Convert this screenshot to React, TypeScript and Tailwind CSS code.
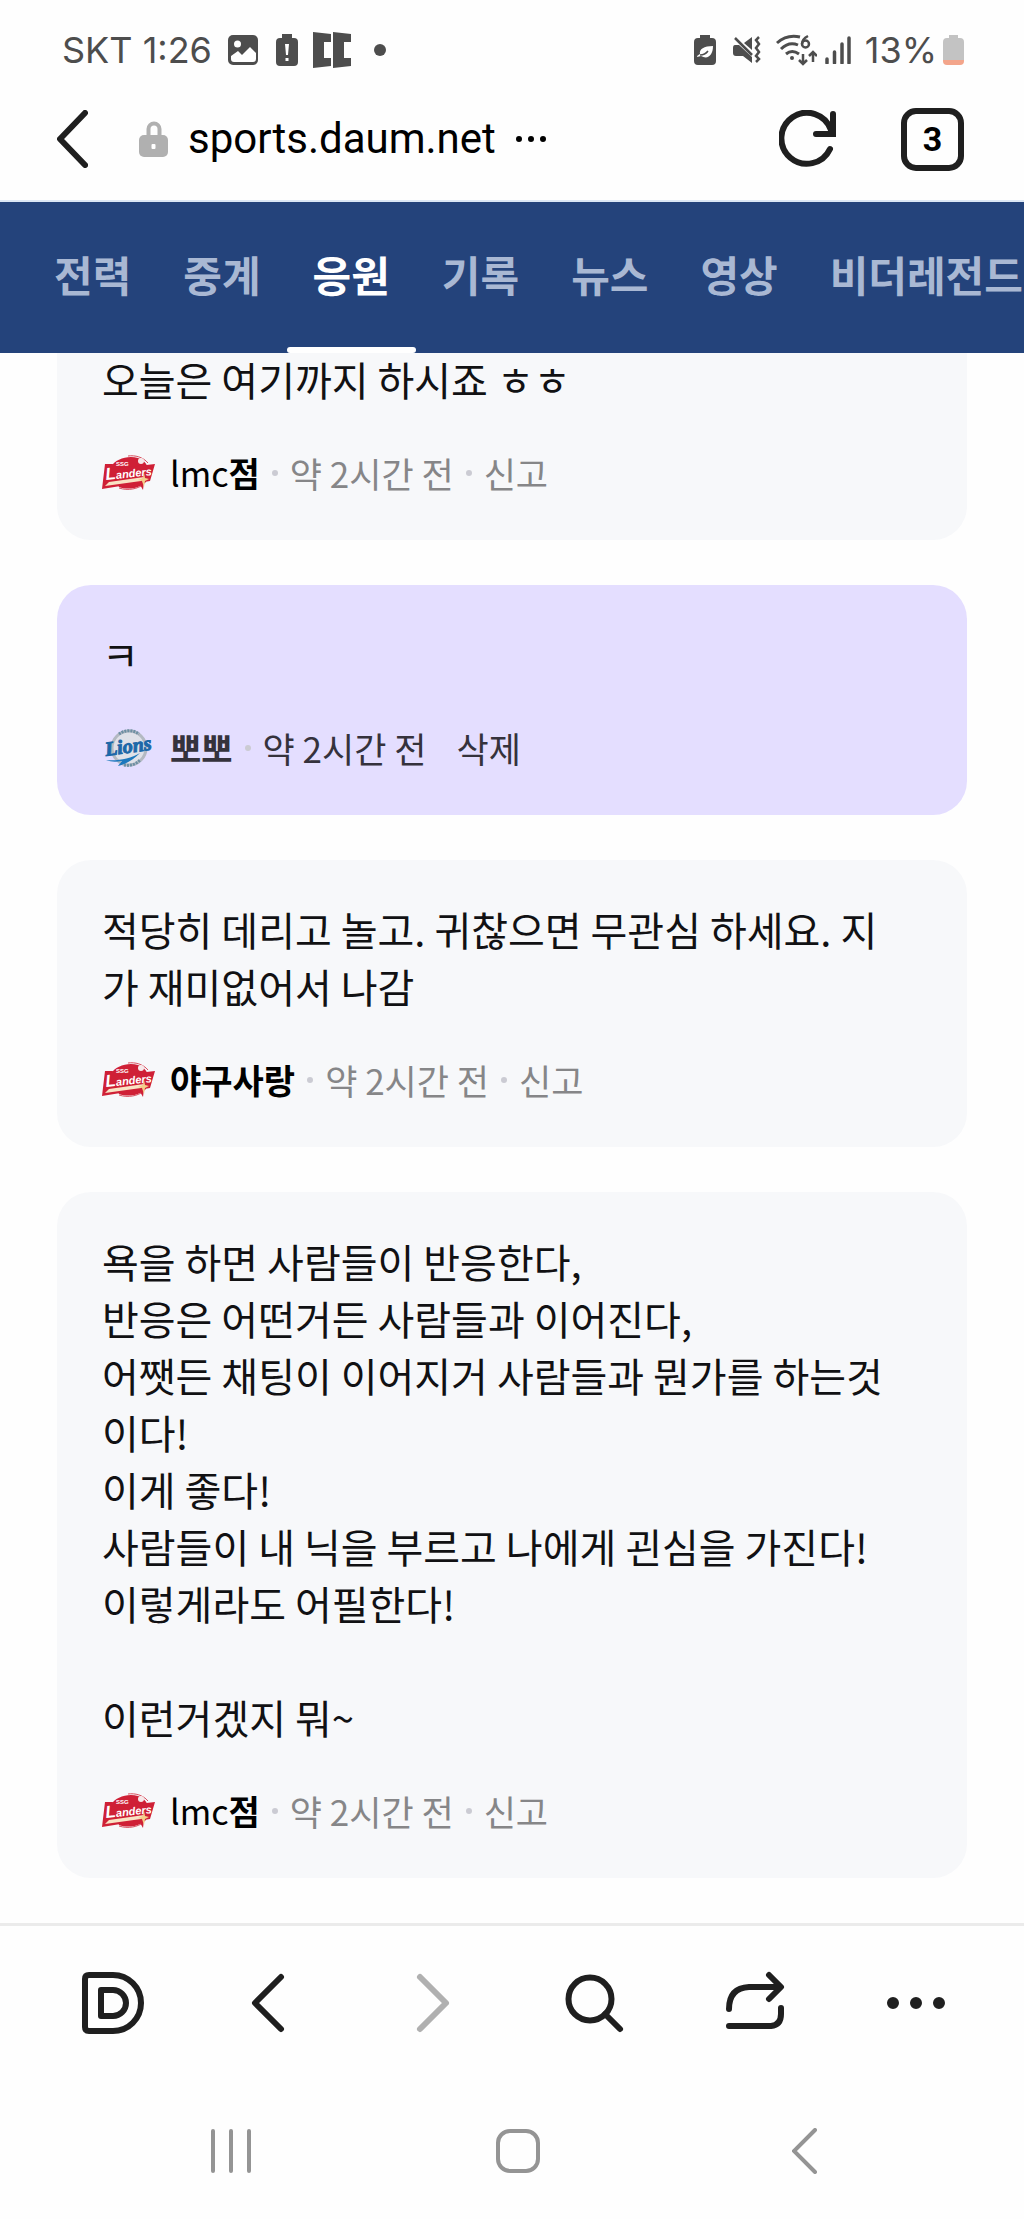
import { clsx } from "clsx";
import type { ReactNode } from "react";

const TABS = ["전력", "중계", "응원", "기록", "뉴스", "영상", "비더레전드"];
const ACTIVE_TAB = "응원";

type Team = "landers" | "lions";

interface Comment {
	id: number;
	team: Team;
	latinName?: string;
	name: string;
	time: string;
	action: string;
	mine?: boolean;
	text: string;
}

const COMMENTS: Comment[] = [
	{
		id: 1,
		team: "landers",
		latinName: "lmc",
		name: "점",
		time: "약 2시간 전",
		action: "신고",
		text: "오늘은 여기까지 하시죠 ㅎㅎ",
	},
	{
		id: 2,
		team: "lions",
		name: "뽀뽀",
		time: "약 2시간 전",
		action: "삭제",
		mine: true,
		text: "ㅋ",
	},
	{
		id: 3,
		team: "landers",
		name: "야구사랑",
		time: "약 2시간 전",
		action: "신고",
		text: "적당히 데리고 놀고. 귀찮으면 무관심 하세요. 지가 재미없어서 나감",
	},
	{
		id: 4,
		team: "landers",
		latinName: "lmc",
		name: "점",
		time: "약 2시간 전",
		action: "신고",
		text: "욕을 하면 사람들이 반응한다,\n반응은 어떤거든 사람들과 이어진다,\n어쨋든 채팅이 이어지거 사람들과 뭔가를 하는것이다!\n이게 좋다!\n사람들이 내 닉을 부르고 나에게 괸심을 가진다!\n이렇게라도 어필한다!\n\n이런거겠지 뭐~",
	},
];

function LandersLogo() {
	return (
		<svg
			viewBox="0 0 54 36"
			className="h-9 w-[54px] overflow-visible"
			role="img"
			aria-label="SSG Landers"
		>
			<path d="M9 12C13 4 26 0 36 3c6 2 9 6 10 11L44 27c-7 7-19 8-27 5Z" fill="#cf2036" />
			<path d="M26 1c7-1 15 1 20 7M17 33c9 3 19 1 25-4" fill="none" stroke="#d9505f" />
			<path d="M3 9h8l-1 5 43-5-5 17-6 1-1 8-4-7L0 34Z" fill="#cf2036" />
			<circle cx="39" cy="6" r="3" fill="#f7e9ea" />
			<path d="M3 31 7 27 42 22 39 26Z" fill="#f9e3c4" />
			<path d="m42 18 1 5 4 1-4 2-1 6-2-6-4-1 5-2Z" fill="#f4cf8a" />
			<text
				x="4"
				y="25"
				transform="rotate(-6 4 25)"
				fill="#fff"
				fontFamily="Liberation Sans, sans-serif"
				fontSize="11"
				fontStyle="italic"
				fontWeight="700"
			>
				<tspan fontSize="17">L</tspan>anders
			</text>
			<text
				x="14"
				y="11"
				fill="#fff"
				fontFamily="Liberation Sans, sans-serif"
				fontSize="6"
				fontWeight="700"
			>
				SSG
			</text>
		</svg>
	);
}

function LionsLogo() {
	return (
		<svg viewBox="0 0 54 40" className="h-10 w-[54px]" role="img" aria-label="Samsung Lions">
			<circle cx="27" cy="20" r="17" fill="#dfe1e8" stroke="#b3b9c2" strokeWidth="3" />
			<path
				d="M17 6a17 17 0 0 1 20 0M22 37a17 17 0 0 0 16-5"
				fill="none"
				stroke="#6d8fa3"
				strokeWidth="3"
				strokeDasharray="2 1"
			/>
			<text
				x="4"
				y="28"
				transform="rotate(-8 4 28)"
				fill="#1c68a8"
				stroke="#1c68a8"
				strokeWidth="1"
				fontFamily="Liberation Serif, serif"
				fontSize="20"
				fontStyle="italic"
				fontWeight="700"
			>
				Lions
			</text>
			<path d="M4 32c12 1 24-1 34-7-6 6-13 11-22 13 1-2 3-3 4-5-6 1-11 1-16-1Z" fill="#1c78bd" />
		</svg>
	);
}

function Dot({ hidden }: { hidden?: boolean }) {
	return (
		<span
			className={clsx(
				"mx-[12px] size-[6px] shrink-0 rounded-full",
				hidden ? "bg-transparent" : "bg-[#cbcbd3]",
			)}
		/>
	);
}

function CommentCard({ comment }: { comment: Comment }) {
	return (
		<li
			className={clsx(
				"rounded-[34px] pt-[41px] pr-[56px] pb-[45px] pl-[45px]",
				comment.mine ? "bg-[#e4deff]" : "bg-[#f7f8fa]",
			)}
		>
			<p className="whitespace-pre-line break-all text-[40px] text-[#111113] leading-[57px]">
				{comment.text}
			</p>
			<div
				className={clsx(
					"mt-[43px] flex items-center text-[35px] leading-[44px]",
					comment.mine ? "text-[#35323c]" : "text-[#868688]",
				)}
			>
				<span className="mr-[14px] flex h-[34px] items-center">
					{comment.team === "lions" ? <LionsLogo /> : <LandersLogo />}
				</span>
				<strong className={clsx("font-bold text-[34px]", !comment.mine && "text-black")}>
					{comment.latinName && <span className="font-normal">{comment.latinName}</span>}
					{comment.name}
				</strong>
				<Dot />
				<time>{comment.time}</time>
				<Dot hidden={comment.mine} />
				<button type="button">{comment.action}</button>
			</div>
		</li>
	);
}

function StatusBar() {
	return (
		<div className="flex h-[100px] items-center justify-between pr-[60px] pl-[62px] font-['Inter',sans-serif] text-[#4d4d4d] text-[36px]">
			<div className="flex items-center">
				<span className="mr-[16px]">SKT 1:26</span>
				<svg viewBox="0 0 30 30" className="mr-[18px] size-[30px]" aria-hidden="true">
					<rect width="30" height="30" rx="5" fill="currentColor" />
					<circle cx="9.500" cy="9" r="3.500" fill="#fff" />
					<path d="m3 21 7-5 4 4 8-8 6 6v6q0 3-3 3H6q-3 0-3-3Z" fill="#fff" />
				</svg>
				<svg viewBox="0 0 22 32" className="mr-[15px] h-8 w-[22px]" aria-hidden="true">
					<path d="M6 0h10v4h2q4 0 4 4v20q0 4-4 4H4q-4 0-4-4V8q0-4 4-4h2Z" fill="currentColor" />
					<path d="M9 10h4l-1 11h-2Zm.500 14h3v3h-3Z" fill="#fff" />
				</svg>
				<svg viewBox="0 0 38 36" className="mr-[23px] h-9 w-[38px]" aria-hidden="true">
					<path
						d="M0 0 18 2v8h-7v16h7v8L0 36ZM20 0l18 2v8h-7v16h7v8l-18 2Z"
						fill="currentColor"
					/>
				</svg>
				<span className="size-3 rounded-full bg-[#4d4d4d]" />
			</div>
			<div className="flex items-center">
				<svg viewBox="0 0 22 30" className="mr-[16px] h-[30px] w-[22px]" aria-hidden="true">
					<path d="M6 0h10v3h2q4 0 4 4v19q0 4-4 4H4q-4 0-4-4V7q0-4 4-4h2Z" fill="currentColor" />
					<path d="M19 11c-9 0-14 3-13 8-1 1-3 1-3 3l4-1c7 4 12-1 12-10Z" fill="#fff" />
					<path d="M6 20q5 0 8-4" fill="none" stroke="currentColor" strokeWidth="1.500" />
				</svg>
				<svg viewBox="0 0 29 28" className="mr-[14px] h-7 w-[29px]" aria-hidden="true">
					<path
						d="M3 9h4l13 12v6l-9-7H4q-3 0-3-3v-5q0-3 2-3ZM20 1v13l-8-7Z"
						fill="currentColor"
					/>
					<path
						d="m3 2 17 17M27 1l-3 3 3 4-3 4 3 4-3 4 3 3-3 3"
						fill="none"
						stroke="currentColor"
						strokeWidth="2.500"
					/>
				</svg>
				<svg
					viewBox="0 0 42 32"
					className="mr-[8px] h-8 w-[42px]"
					fill="none"
					stroke="currentColor"
					strokeWidth="3"
					aria-hidden="true"
				>
					<path d="M2 9Q12 0 25 3M6 15q8-8 17-4M11 20q6-5 13 0" />
					<circle cx="17" cy="24" r="2" fill="currentColor" stroke="none" />
					<path
						d="M33 2q-6 3-6 8M28 20v10m-4-4 4 4 4-4M38 28V18m-4 4 4-4 4 4"
						strokeWidth="2.500"
					/>
					<circle cx="30.500" cy="10" r="3.500" strokeWidth="2.500" />
				</svg>
				<svg viewBox="0 0 26 28" className="mr-[14px] h-7 w-[26px]" aria-hidden="true">
					<path
						d="M2 23v4M9.500 16v11M17 8v19M24 2v25"
						stroke="currentColor"
						strokeWidth="3.500"
						strokeLinecap="round"
					/>
				</svg>
				<span className="mr-[6px]">13%</span>
				<svg viewBox="0 0 21 30" className="h-[30px] w-[21px]" aria-hidden="true">
					<path d="M6 0h9v3h2q4 0 4 4v18H0V7q0-4 4-4h2Z" fill="#c3c3c3" />
					<path d="M0 25h21v1q0 4-4 4H4q-4 0-4-4Z" fill="#f3a58b" />
				</svg>
			</div>
		</div>
	);
}

function AddressBar() {
	return (
		<div className="flex h-[78px] items-center pr-[60px] pl-[57px] text-[#1f1f1f]">
			<button type="button" aria-label="뒤로" className="mr-[51px]">
				<svg viewBox="0 0 31 58" className="h-[58px] w-[31px]">
					<path
						d="M28 3 3 29l25 26"
						fill="none"
						stroke="currentColor"
						strokeWidth="6"
						strokeLinecap="round"
						strokeLinejoin="round"
					/>
				</svg>
			</button>
			<svg viewBox="0 0 29 38" className="mr-[20px] h-[38px] w-[29px]" aria-hidden="true">
				<path d="M9.500 17V9a5.500 5.500 0 0 1 11 0v8" fill="none" stroke="#b0b0b0" strokeWidth="4" />
				<rect y="15" width="29" height="22" rx="5" fill="#b0b0b0" />
				<rect x="12.500" y="24" width="4" height="5" rx="1" fill="#fff" />
			</svg>
			<span className="font-['Roboto',sans-serif] text-[42px] text-black leading-[50px]">
				sports.daum.net
			</span>
			<svg viewBox="0 0 30 6" className="ml-[20px] h-[6px] w-[30px]" aria-hidden="true">
				<path d="M3 3h0M15 3h0M27 3h0" stroke="#000" strokeWidth="6" strokeLinecap="round" />
			</svg>
			<button type="button" aria-label="새로고침" className="mr-[64px] ml-auto">
				<svg
					viewBox="0 0 58 58"
					className="size-[58px]"
					fill="none"
					stroke="currentColor"
					strokeWidth="6"
					strokeLinecap="round"
				>
					<path d="M51 39A25.500 25.500 0 1 1 52 20M54 4v20H37" />
				</svg>
			</button>
			<button
				type="button"
				aria-label="탭 3개"
				className="flex size-[63px] items-center justify-center rounded-[15px] border-6 border-[#1f1f1f] font-['Roboto',sans-serif] font-bold text-[34px] text-black"
			>
				3
			</button>
		</div>
	);
}

function ToolButton({ label, children }: { label: string; children: ReactNode }) {
	return (
		<button type="button" aria-label={label} className="flex items-center justify-center">
			<svg
				viewBox="0 0 64 64"
				className="size-16"
				fill="none"
				stroke="currentColor"
				strokeWidth="6"
				strokeLinecap="round"
				strokeLinejoin="round"
			>
				{children}
			</svg>
		</button>
	);
}

export default function App() {
	return (
		<div className="flex min-h-screen flex-col overflow-x-hidden bg-[#fefefe] font-['Noto_Sans_CJK_KR',sans-serif]">
			<header className="border-[#dce7f5] border-b-2 pb-[22px]">
				<StatusBar />
				<AddressBar />
			</header>

			<nav className="sticky top-0 z-10 flex overflow-hidden bg-[#24437b] pl-7">
				{TABS.map((tab) => (
					<a
						key={tab}
						href="#"
						className={clsx(
							"relative flex h-[151px] shrink-0 items-center px-[26px] pb-2 font-bold text-[42px]",
							tab === ACTIVE_TAB ? "text-white" : "text-[#a9b8d3]",
						)}
					>
						{tab}
						{tab === ACTIVE_TAB && (
							<span className="absolute inset-x-0 bottom-0 h-[6px] rounded-[3px] bg-white" />
						)}
					</a>
				))}
			</nav>

			{/* the list is scrolled, so its first card starts under the tabs */}
			<main className="-mt-[43px] flex-1 px-[57px] pb-[45px]">
				<ul className="flex flex-col gap-[45px]">
					{COMMENTS.map((comment) => (
						<CommentCard key={comment.id} comment={comment} />
					))}
				</ul>
			</main>

			<footer className="border-[#ebebeb] border-t-3">
				<div className="grid h-[153px] grid-cols-6 pr-7 pl-8 text-[#1f1f1f]">
					<ToolButton label="다음 홈">
						<path d="M9 4h24a28 28 0 0 1 0 56H9q-4 0-4-4V8q0-4 4-4Z" />
						<path d="M21 19h12a13 13 0 0 1 0 26H21Z" />
					</ToolButton>
					<ToolButton label="이전">
						<path d="M40 6 14 32l26 26" />
					</ToolButton>
					<ToolButton label="다음">
						<path d="m18 6 26 26-26 26" stroke="#b0b0b0" />
					</ToolButton>
					<ToolButton label="검색">
						<circle cx="28" cy="28" r="21.500" />
						<path d="m43 43 15 15" />
					</ToolButton>
					<ToolButton label="공유">
						<path d="M6 38q0-21 20-22h31M46 4l12 12-12 12M58 37v6q0 11-10 12H6" />
					</ToolButton>
					<ToolButton label="더보기">
						<path d="M9 32h0M32 32h0M55 32h0" strokeWidth="12" />
					</ToolButton>
				</div>
				<div className="grid h-[140px] grid-cols-3 pt-1 pr-[76px] pl-[88px] text-[#949494]">
					<button type="button" aria-label="최근 앱" className="flex items-center justify-center">
						<svg viewBox="0 0 40 44" className="h-11 w-10">
							<path
								d="M2 2v40M20 2v40M38 2v40"
								stroke="currentColor"
								strokeWidth="4"
								strokeLinecap="round"
							/>
						</svg>
					</button>
					<button type="button" aria-label="홈" className="flex items-center justify-center">
						<span className="size-11 rounded-[14px] border-4 border-current" />
					</button>
					<button type="button" aria-label="뒤로" className="flex items-center justify-center">
						<svg viewBox="0 0 25 46" className="h-[46px] w-[25px]">
							<path
								d="M23 2 2 23l21 21"
								fill="none"
								stroke="currentColor"
								strokeWidth="4"
								strokeLinecap="round"
							/>
						</svg>
					</button>
				</div>
			</footer>
		</div>
	);
}
